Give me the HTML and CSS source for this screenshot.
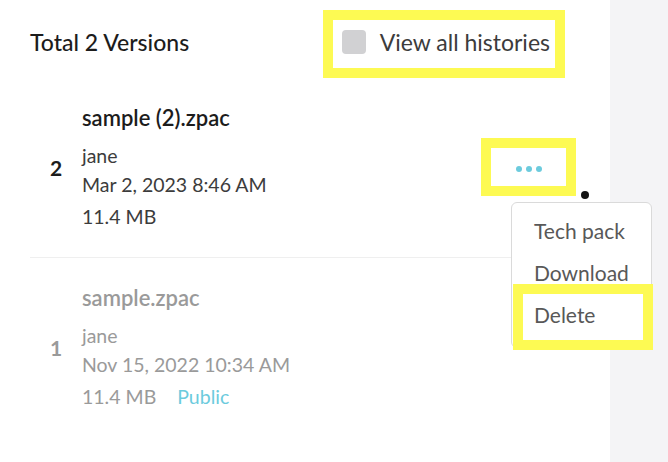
FILE: index.html
```html
<html>
	<head>
		<title>Versions</title>
		<meta charset="utf-8">
		<link rel="stylesheet" href="styles.css">
	</head>
	<body>
		<div id="page">
			<div class="panel">
				<div class="header">
					<p class="total">Total 2 Versions</p>
					<label class="filter mark">
						<span class="checkbox"></span>
						<span>View all histories</span>
					</label>
				</div>

				<div class="version">
					<p class="number">2</p>
					<div class="info">
						<p class="file">sample (2).zpac</p>
						<p class="meta">jane</p>
						<p class="meta">Mar 2, 2023 8:46 AM</p>
						<p class="meta size">11.4 MB</p>
					</div>
					<div class="actions">
						<button class="more mark"><span></span><span></span><span></span></button>
						<span class="pointer"></span>
						<ul class="menu">
							<li>Tech pack</li>
							<li>Download</li>
							<li class="picked">Delete</li>
						</ul>
					</div>
				</div>

				<div class="version old">
					<p class="number">1</p>
					<div class="info">
						<p class="file">sample.zpac</p>
						<p class="meta">jane</p>
						<p class="meta">Nov 15, 2022 10:34 AM</p>
						<p class="meta size">11.4 MB <span class="public">Public</span></p>
					</div>
				</div>
			</div>
			<div class="side"></div>
		</div>
	</body>
</html>
```

FILE: styles.css
```css
body {
	margin: 0;
	background-color: white;
	font-family: Lato, "Noto Sans", sans-serif;
	color: #1c1c1c;
}

p {
	margin: 0;
}

#page {
	display: flex;
	height: 462px;
}

.panel {
	width: 610px;
	box-sizing: border-box;
	padding: 10px 34px 0 30px;
}

.side {
	flex: 1;
	background-color: rgb(244, 244, 246);
}

.mark {
	border: 10px solid rgb(253, 250, 83);
}

.header {
	display: flex;
	align-items: center;
	justify-content: space-between;
}

.total {
	font-size: 23px;
	font-weight: 500;
	margin-bottom: 4px;
}

.filter {
	display: flex;
	align-items: center;
	gap: 14px;
	height: 44px;
	box-sizing: content-box;
	padding: 0 5px 4px 9px;
	margin-right: 11px;
	font-size: 23px;
	color: rgb(60, 60, 60);
}

.checkbox {
	width: 24px;
	height: 24px;
	border-radius: 4px;
	background-color: rgb(209, 209, 211);
}

.version {
	display: flex;
	align-items: center;
	padding: 25px 0 26px 0;
	border-bottom: 1px solid rgb(239, 239, 239);
}

.version.old {
	border-bottom: none;
	color: rgb(154, 154, 154);
}

.number {
	width: 52px;
	text-align: center;
	font-size: 21px;
	font-weight: bold;
}

.info {
	flex: 1;
}

.file {
	font-size: 22px;
	font-weight: 600;
	line-height: 30px;
	margin-bottom: 8px;
}

.meta {
	font-size: 19.5px;
	line-height: 29px;
	color: rgb(60, 60, 60);
}

.old .meta {
	color: rgb(154, 154, 154);
}

.size {
	margin-top: 3px;
}

.public {
	margin-left: 16px;
	color: rgb(108, 203, 221);
}

.actions {
	position: relative;
}

.more {
	display: flex;
	align-items: center;
	justify-content: center;
	gap: 4px;
	width: 95px;
	height: 58px;
	padding: 4px 0 0 0;
	background-color: white;
	cursor: pointer;
}

.more span {
	width: 6px;
	height: 6px;
	border-radius: 50%;
	background-color: rgb(108, 203, 221);
}

.pointer {
	position: absolute;
	left: 100px;
	top: 53px;
	width: 8px;
	height: 8px;
	border-radius: 50%;
	background-color: rgb(20, 20, 20);
}

.menu {
	position: absolute;
	left: 30px;
	top: 64px;
	width: 141px;
	box-sizing: border-box;
	margin: 0;
	padding: 7px 0 11px 0;
	list-style-type: none;
	background-color: white;
	border: 1px solid rgb(218, 218, 218);
	border-radius: 6px;
	font-size: 21px;
	color: rgb(88, 88, 88);
}

.menu li {
	height: 42px;
	line-height: 42px;
	padding-left: 22px;
}

.picked {
	position: relative;
}

.picked::after {
	content: "";
	position: absolute;
	left: 1px;
	right: -2px;
	top: -10px;
	bottom: -14px;
	border: 10px solid rgb(253, 250, 83);
}
```
